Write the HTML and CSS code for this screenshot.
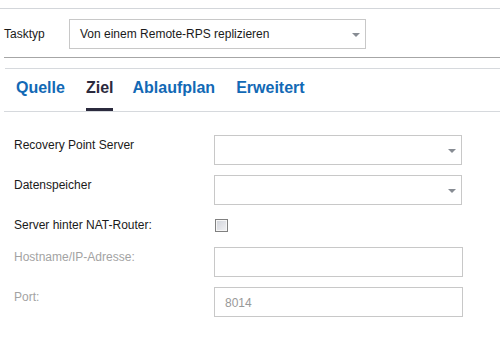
FILE: index.html
```html
<!DOCTYPE html>
<html lang="de">
<head>
<meta charset="utf-8">
<title>Task</title>
<link rel="stylesheet" href="styles.css">
</head>
<body>
<div class="page">
  <div class="task-row">
    <span class="task-label">Tasktyp</span>
    <div class="select task-select">
      <span class="select-text">Von einem Remote-RPS replizieren</span>
      <span class="arrow"></span>
    </div>
  </div>
  <div class="tabs">
    <span class="tab">Quelle</span>
    <span class="tab active">Ziel</span>
    <span class="tab">Ablaufplan</span>
    <span class="tab">Erweitert</span>
  </div>
  <div class="form">
    <div class="row">
      <span class="label">Recovery Point Server</span>
      <div class="select field"><span class="select-text"></span><span class="arrow"></span></div>
    </div>
    <div class="row">
      <span class="label">Datenspeicher</span>
      <div class="select field"><span class="select-text"></span><span class="arrow"></span></div>
    </div>
    <div class="row row-check">
      <span class="label">Server hinter NAT-Router:</span>
      <span class="checkbox"></span>
    </div>
    <div class="row">
      <span class="label disabled">Hostname/IP-Adresse:</span>
      <div class="input field"></div>
    </div>
    <div class="row">
      <span class="label disabled">Port:</span>
      <div class="input field"><span class="input-text">8014</span></div>
    </div>
  </div>
</div>
</body>
</html>
```
FILE: styles.css
```css
* { box-sizing: border-box; }
html, body { margin: 0; padding: 0; background: #fff; }
body {
  font-family: "Liberation Sans", Arial, sans-serif;
  font-size: 12px;
  color: #1a1a1a;
}
.page { padding-top: 8px; }
.task-row {
  border-top: 1px solid #d3d6da;
  display: flex;
  align-items: center;
  padding: 10px 0 8px 0;
}
.task-label {
  width: 69px;
  padding-left: 4px;
}
.task-select { width: 297px; }
.select {
  height: 30px;
  border: 1px solid #c8c8c8;
  display: flex;
  align-items: center;
  justify-content: space-between;
  padding: 0 5px 0 10px;
  background: #fff;
}
.select-text { line-height: 14px; }
.arrow {
  width: 0; height: 0;
  border-left: 4px solid transparent;
  border-right: 4px solid transparent;
  border-top: 4px solid #878c93;
  margin-top: 1px;
}
.tabs {
  margin-left: 4px;
  border-top: 1px solid #a6a6a6;
  border-bottom: 1px solid #d6d9dd;
  display: flex;
  gap: 21px;
  padding: 21px 0 0 12px;
  position: relative;
}
.tabs::before {
  content: "";
  position: absolute;
  left: 1px; right: 0; top: 10px;
  border-top: 1px solid #d6d9dd;
}
.tab {
  font-size: 16px;
  font-weight: bold;
  line-height: 18px;
  color: #1269b5;
  padding-bottom: 11px;
  border-bottom: 3px solid transparent;
}
.tab.active {
  color: #2b2a3d;
  border-bottom-color: #2b2a3d;
  margin-right: -2px;
}
.form {
  padding: 23px 0 0 14px;
  display: flex;
  flex-direction: column;
  gap: 10px;
}
.row {
  display: flex;
  align-items: flex-start;
  min-height: 30px;
}
.row-check { min-height: 22px; }
.label {
  width: 200px;
  padding-top: 3px;
  line-height: 14px;
}
.label.disabled { color: #a3a3a3; }
.field { width: 249px; }
.select.field { width: 248px; }
.input {
  height: 30px;
  border: 1px solid #c8c8c8;
  padding-left: 10px;
  display: flex;
  align-items: center;
}
.input-text { color: #999; line-height: 14px; padding-top: 1px; }
.checkbox {
  margin-top: 4px;
  margin-left: 1px;
  width: 13px;
  height: 13px;
  border: 1px solid #808080;
  background: linear-gradient(135deg, #d0d3da 0%, #f2f2f4 100%);
  box-shadow: inset 0 0 0 1px #f6f6f6;
}
```
